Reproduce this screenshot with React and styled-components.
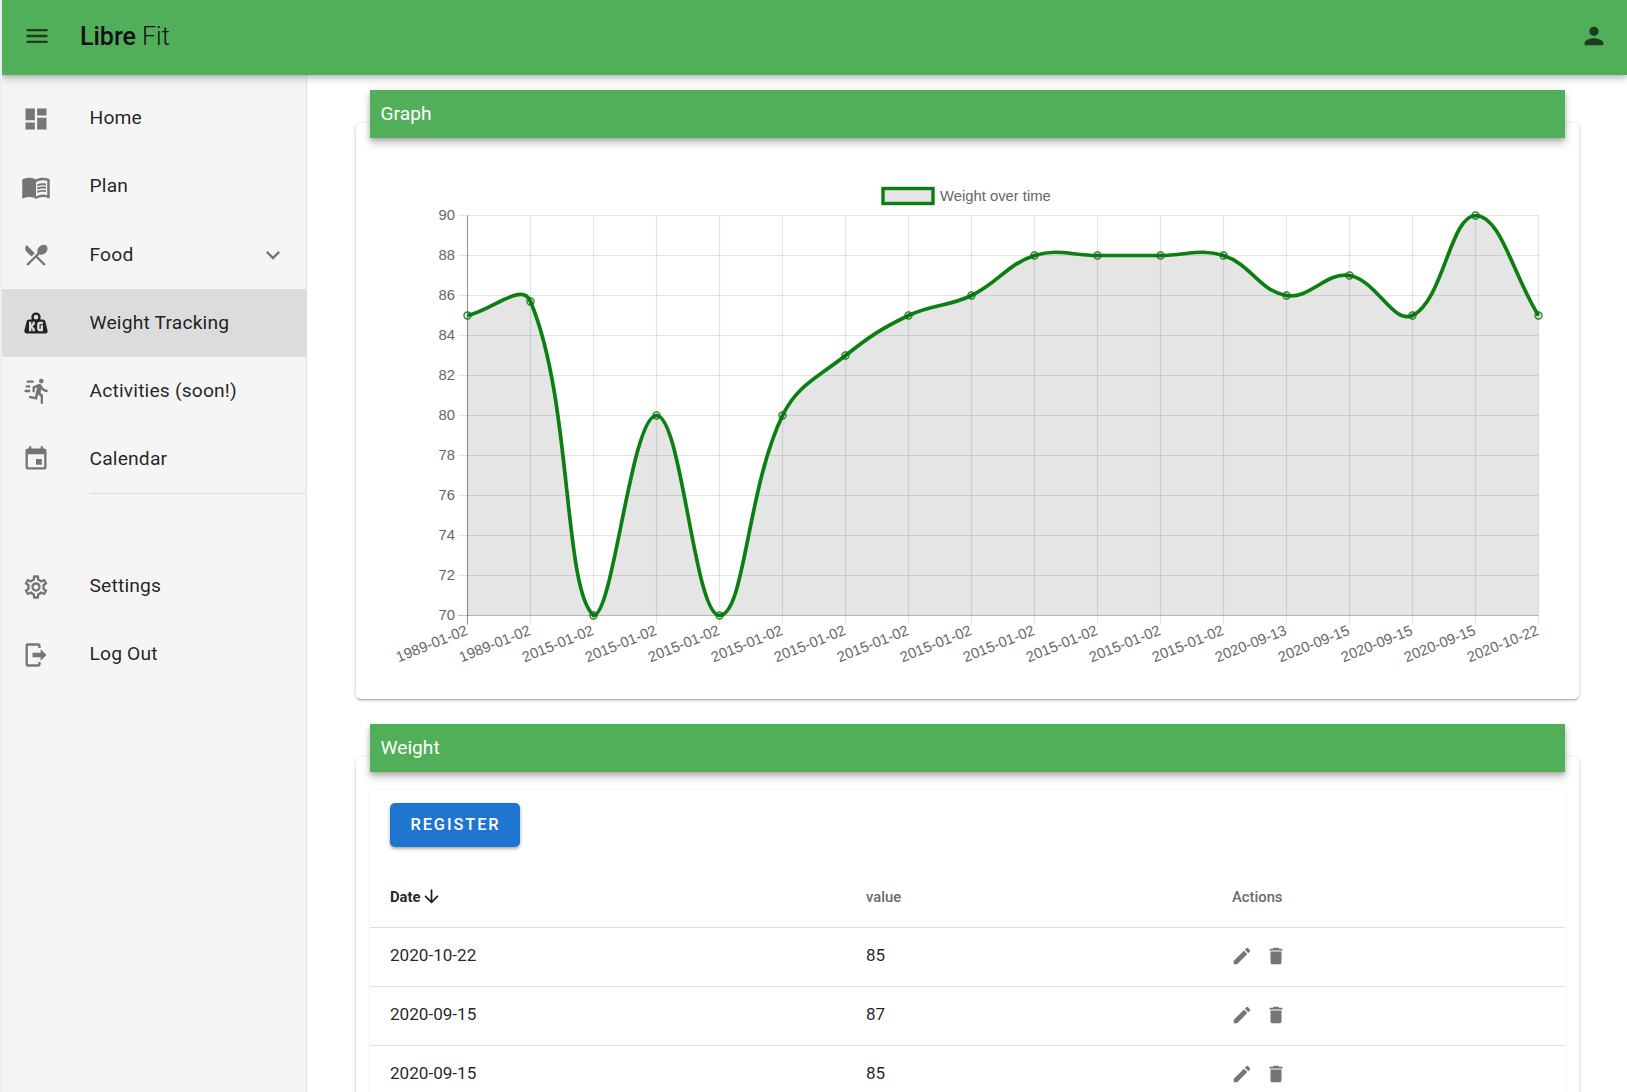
import React from "react";
import styled, { createGlobalStyle } from "styled-components";
import {
  MdMenu,
  MdPerson,
  MdDashboard,
  MdMenuBook,
  MdRestaurantMenu,
  MdEvent,
  MdExpandMore,
  MdOutlineSettings,
  MdEdit,
  MdDelete,
  MdArrowDownward,
} from "react-icons/md";

const GlobalStyle = createGlobalStyle`
  html, body {
    margin: 0;
    height: 100%;
    overflow: hidden;
    background: #e9eef2;
    font-family: Roboto, "Liberation Sans", sans-serif;
  }
`;

// the three icons below are not in the material set
const KiloIcon = () => (
  <svg viewBox="0 0 24 24" width="28" height="28" fill="currentColor">
    <path d="M12,3A4,4 0 0,1 16,7C16,7.73 15.81,8.41 15.46,9H18C18.95,9 19.75,9.67 19.95,10.56C21.96,18.57 22,18.78 22,19A2,2 0 0,1 20,21H4A2,2 0 0,1 2,19C2,18.78 2.04,18.57 4.05,10.56C4.25,9.67 5.05,9 6,9H8.54C8.19,8.41 8,7.73 8,7A4,4 0 0,1 12,3M12,5A2,2 0 0,0 10,7A2,2 0 0,0 12,9A2,2 0 0,0 14,7A2,2 0 0,0 12,5M6,11V19H8V16.5L9,17.5V19H11V17L9,15L11,13V11H9V12.5L8,13.5V11H6M15,11C13.89,11 13,11.89 13,13V17C13,18.11 13.89,19 15,19H18V14H16V17H15V13H18V11H15Z" />
  </svg>
);
const RunIcon = () => (
  <svg viewBox="0 0 24 24" width="28" height="28" fill="currentColor">
    <path d="M16.5,5.5A2,2 0 0,0 18.5,3.5A2,2 0 0,0 16.5,1.5A2,2 0 0,0 14.5,3.5A2,2 0 0,0 16.5,5.5M12.9,19.4L13.9,15L16,17V23H18V15.5L15.9,13.5L16.5,10.5C17.89,12.09 19.89,13 22,13V11C20.24,11.03 18.6,10.11 17.7,8.6L16.7,7C16.34,6.4 15.7,6 15,6C14.7,6 14.5,6.1 14.2,6.1L9,8.3V13H11V9.6L12.8,8.9L11.2,17L6.3,16L5.9,18L12.9,19.4M4,9A1,1 0 0,1 3,8A1,1 0 0,1 4,7H7V9H4M5,5A1,1 0 0,1 4,4A1,1 0 0,1 5,3H10V5H5M3,13A1,1 0 0,1 2,12A1,1 0 0,1 3,11H7V13H3Z" />
  </svg>
);
const LogoutIcon = () => (
  <svg viewBox="0 0 24 24" width="28" height="28" fill="currentColor">
    <path d="M16,17V14H9V10H16V7L21,12L16,17M14,2A2,2 0 0,1 16,4V6H14V4H5V20H14V18H16V20A2,2 0 0,1 14,22H5A2,2 0 0,1 3,20V4A2,2 0 0,1 5,2H14Z" />
  </svg>
);

const topNav = [
  { label: "Home", icon: <MdDashboard size={28} /> },
  { label: "Plan", icon: <MdMenuBook size={30} /> },
  { label: "Food", icon: <MdRestaurantMenu size={28} />, expand: true },
  { label: "Weight Tracking", icon: <KiloIcon />, active: true },
  { label: "Activities (soon!)", icon: <RunIcon /> },
  { label: "Calendar", icon: <MdEvent size={28} /> },
];
const bottomNav = [
  { label: "Settings", icon: <MdOutlineSettings size={28} /> },
  { label: "Log Out", icon: <LogoutIcon /> },
];

const rows = [
  { date: "2020-10-22", value: 85 },
  { date: "2020-09-15", value: 87 },
  { date: "2020-09-15", value: 85 },
];

const labels = [
  "1989-01-02", "1989-01-02", "2015-01-02", "2015-01-02", "2015-01-02", "2015-01-02",
  "2015-01-02", "2015-01-02", "2015-01-02", "2015-01-02", "2015-01-02", "2015-01-02",
  "2015-01-02", "2020-09-13", "2020-09-15", "2020-09-15", "2020-09-15", "2020-10-22",
];
const weights = [85, 85.7, 70, 80, 70, 80, 83, 85, 86, 88, 88, 88, 88, 86, 87, 85, 90, 85];

const LEFT = 467.5;
const RIGHT = 1538.5;
const TOP = 215.5;
const BOTTOM = 615.5;
const STEP = (RIGHT - LEFT) / (weights.length - 1);
const yOf = (v) => BOTTOM - ((v - 70) / 20) * (BOTTOM - TOP);
const points = weights.map((v, i) => ({ x: LEFT + i * STEP, y: yOf(v) }));
const clampY = (y) => Math.min(BOTTOM, Math.max(TOP, y));

// same spline the chart lib uses, tension .4 and control points kept in the area
function curvePath(pts, t = 0.4) {
  const ctrl = pts.map((p, i) => {
    const a = pts[i - 1] || p;
    const b = pts[i + 1] || p;
    const d1 = Math.hypot(p.x - a.x, p.y - a.y);
    const d2 = Math.hypot(b.x - p.x, b.y - p.y);
    const s1 = d1 / (d1 + d2) || 0;
    const s2 = d2 / (d1 + d2) || 0;
    return {
      px: p.x - t * s1 * (b.x - a.x),
      py: clampY(p.y - t * s1 * (b.y - a.y)),
      nx: p.x + t * s2 * (b.x - a.x),
      ny: clampY(p.y + t * s2 * (b.y - a.y)),
    };
  });
  let d = `M${pts[0].x} ${pts[0].y}`;
  for (let i = 1; i < pts.length; i++) {
    d += `C${ctrl[i - 1].nx} ${ctrl[i - 1].ny} ${ctrl[i].px} ${ctrl[i].py} ${pts[i].x} ${pts[i].y}`;
  }
  return d;
}

function WeightChart() {
  const line = curvePath(points);
  const ticks = [];
  for (let v = 70; v <= 90; v += 2) ticks.push(v);
  return (
    <ChartSvg viewBox="356 138 1223 561">
      <rect x="883" y="188.5" width="50" height="15" fill="#e5e5e5" stroke="#0c7f12" strokeWidth="3.4" />
      <ChartText x="940" y="201">Weight over time</ChartText>
      {ticks.map((v) => (
        <g key={v}>
          <line x1="458" x2={RIGHT} y1={yOf(v)} y2={yOf(v)} stroke="#000" strokeOpacity={v === 70 ? 0.25 : 0.1} strokeWidth="1.2" />
          <ChartText x="455" y={yOf(v) + 4} textAnchor="end">{v}</ChartText>
        </g>
      ))}
      {points.map((p, i) => (
        <g key={i}>
          <line x1={p.x} x2={p.x} y1={TOP} y2={BOTTOM + 9} stroke="#000" strokeOpacity={i === 0 ? 0.4 : 0.1} strokeWidth="1.2" />
          <ChartText x={p.x - 1} y={BOTTOM + 13} textAnchor="end" transform={`rotate(-22 ${p.x - 1} ${BOTTOM + 13})`} dy="6">
            {labels[i]}
          </ChartText>
        </g>
      ))}
      <path d={`${line}L${RIGHT} ${BOTTOM}L${LEFT} ${BOTTOM}Z`} fill="#000" fillOpacity="0.1" />
      <path d={line} fill="none" stroke="#0c7f12" strokeWidth="3.7" />
      {points.map((p, i) => (
        <circle key={i} cx={p.x} cy={p.y} r="3.6" fill="#000" fillOpacity="0.1" stroke="#0c7f12" strokeWidth="1.2" />
      ))}
    </ChartSvg>
  );
}

function NavRow({ item }) {
  return (
    <NavItem $active={item.active}>
      <NavIcon $active={item.active}>{item.icon}</NavIcon>
      <NavLabel>{item.label}</NavLabel>
      {item.expand && (
        <Chevron>
          <MdExpandMore size={28} />
        </Chevron>
      )}
    </NavItem>
  );
}

function App() {
  return (
    <>
      <GlobalStyle />
      <Page>
        <AppBar>
          <BarIcon>
            <MdMenu size={28} />
          </BarIcon>
          <Brand>
            <b>Libre</b> Fit
          </Brand>
          <BarIcon $right>
            <MdPerson size={28} />
          </BarIcon>
        </AppBar>
        <Shell>
          <Sidebar>
            {topNav.map((item) => (
              <NavRow key={item.label} item={item} />
            ))}
            <Divider />
            {bottomNav.map((item) => (
              <NavRow key={item.label} item={item} />
            ))}
          </Sidebar>
          <Main>
            <Card>
              <CardHeader>Graph</CardHeader>
              <WeightChart />
            </Card>
            <Card>
              <CardHeader>Weight</CardHeader>
              <TablePaper>
                <Toolbar>
                  <RegisterButton>Register</RegisterButton>
                </Toolbar>
                <Table>
                  <thead>
                    <tr>
                      <HeadCell $width="476px" $sorted>
                        <SortLabel>
                          Date <MdArrowDownward size={21} />
                        </SortLabel>
                      </HeadCell>
                      <HeadCell $width="366px">value</HeadCell>
                      <HeadCell>Actions</HeadCell>
                    </tr>
                  </thead>
                  <tbody>
                    {rows.map((row, i) => (
                      <tr key={i}>
                        <Cell>{row.date}</Cell>
                        <Cell>{row.value}</Cell>
                        <Cell>
                          <Actions>
                            <MdEdit size={22} />
                            <MdDelete size={22} />
                          </Actions>
                        </Cell>
                      </tr>
                    ))}
                  </tbody>
                </Table>
              </TablePaper>
            </Card>
          </Main>
        </Shell>
      </Page>
    </>
  );
}

const Page = styled.div`
  margin-left: 2px;
  height: 1092px;
  background: #fff;
  display: flex;
  flex-direction: column;
  overflow: hidden;
`;

const AppBar = styled.header`
  position: relative;
  z-index: 2;
  flex: none;
  height: 75px;
  display: flex;
  align-items: center;
  padding: 0 8px 3px 21px;
  box-sizing: border-box;
  background: #51ae59;
  color: rgba(0, 0, 0, 0.65);
  box-shadow: 0 2px 5px rgba(0, 0, 0, 0.2), 0 5px 9px rgba(0, 0, 0, 0.12);
`;

const BarIcon = styled.span`
  display: flex;
  margin-left: ${(p) => (p.$right ? "auto" : "0")};
  margin-right: ${(p) => (p.$right ? "11px" : "0")};
`;

const Brand = styled.div`
  margin-left: 29px;
  font-size: 25px;
  font-weight: 300;
  color: #111;
  b {
    font-weight: 500;
  }
`;

const Shell = styled.div`
  flex: 1;
  min-height: 0;
  display: grid;
  grid-template-columns: 305px 1fr;
`;

const Sidebar = styled.nav`
  background: #f5f5f5;
  border-right: 1px solid #e0e0e0;
  padding-top: 9.6px;
`;

const NavItem = styled.div`
  height: 68.1px;
  display: flex;
  align-items: center;
  background: ${(p) => (p.$active ? "#dcdcdc" : "transparent")};
`;

const NavIcon = styled.span`
  flex: none;
  width: 88px;
  display: flex;
  padding-left: 20px;
  box-sizing: border-box;
  align-items: center;
  color: ${(p) => (p.$active ? "#222" : "#757575")};
  svg:not([width="28"]) {
    margin-left: -1px;
  }
`;

const NavLabel = styled.span`
  font-size: 19.25px;
  color: rgba(0, 0, 0, 0.87);
  letter-spacing: 0.17px;
  margin: 0 0 1.5px -0.5px;
`;

const Chevron = styled.span`
  display: flex;
  margin-left: auto;
  margin-right: 19px;
  color: #757575;
`;

const Divider = styled.div`
  height: 1px;
  margin: -0.6px 0 59px 88px;
  background: #dcdcdc;
`;

const Main = styled.main`
  padding: 48px 48px 0 49px;
  min-width: 0;
`;

const Card = styled.section`
  background: #fff;
  border-radius: 5px;
  margin-bottom: 58px;
  box-shadow: 0 2px 2px -1px rgba(0, 0, 0, 0.2), 0 1px 3px rgba(0, 0, 0, 0.14), 0 1px 5px rgba(0, 0, 0, 0.1);
`;

const CardHeader = styled.h2`
  position: relative;
  margin: 0 14px;
  top: -33px;
  height: 48px;
  margin-bottom: -33px;
  padding-left: 10.5px;
  line-height: 47.5px;
  font-size: 19.2px;
  font-weight: 400;
  color: #fff;
  background: #51ae59;
  box-shadow: 0 5px 8px rgba(0, 0, 0, 0.24), 0 2px 4px rgba(0, 0, 0, 0.14);
`;

const ChartSvg = styled.svg`
  display: block;
  width: 1223px;
  height: 561px;
`;

const ChartText = styled.text`
  font-family: "Liberation Sans", Arial, sans-serif;
  font-size: 14.8px;
  fill: #666;
`;

const TablePaper = styled.div`
  margin: 19px 14px 0;
  background: #fff;
  box-shadow: 0 0 3px rgba(0, 0, 0, 0.08);
`;

const Toolbar = styled.div`
  padding: 12px 20px 0;
`;

const RegisterButton = styled.button`
  width: 130px;
  height: 44px;
  padding: 0 0 2px 1px;
  border: 0;
  border-radius: 5px;
  background: #1f75d0;
  color: #fff;
  font-family: inherit;
  font-size: 16.4px;
  font-weight: 500;
  letter-spacing: 1.9px;
  text-transform: uppercase;
  box-shadow: 0 2px 3px rgba(0, 0, 0, 0.25), 0 1px 5px rgba(0, 0, 0, 0.12);
`;

const Table = styled.table`
  width: 100%;
  border-collapse: collapse;
  table-layout: fixed;
  thead tr {
    height: 80px;
  }
  tbody tr {
    height: 59px;
  }
`;

const HeadCell = styled.th`
  box-sizing: border-box;
  width: ${(p) => p.$width || "auto"};
  padding: 20px 0 0 20px;
  text-align: left;
  font-size: 14.8px;
  font-weight: 500;
  color: ${(p) => (p.$sorted ? "rgba(0,0,0,0.87)" : "#6b6b6b")};
  border-bottom: 1px solid #dedede;
`;

const SortLabel = styled.span`
  display: inline-flex;
  align-items: center;
  gap: 0;
  font-weight: 700;
`;

const Cell = styled.td`
  padding: 0 0 3px 20px;
  font-size: 17.1px;
  color: rgba(0, 0, 0, 0.87);
  border-bottom: 1px solid #dedede;
`;

const Actions = styled.div`
  display: flex;
  gap: 12px;
  color: #757575;
  margin: 2px 0 0 -1.5px;
`;

export default App;
